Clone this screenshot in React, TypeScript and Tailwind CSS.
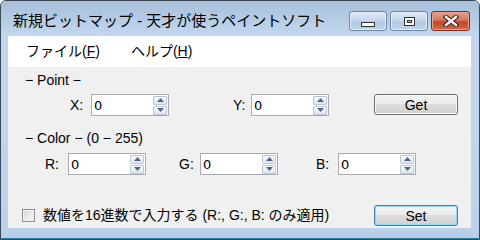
import React from 'react';

const font = "font-['Liberation_Sans','Noto_Sans_CJK_JP',sans-serif]";

function SpinArrow({ up }: { up?: boolean }) {
  return (
    <div className="w-[14px] h-[9px] border border-[#bfc7d2] rounded-[1px] bg-gradient-to-b from-[#f9fafc] to-[#dfe5ee] flex items-center justify-center">
      <svg width="7" height="4" viewBox="0 0 7 4">
        {up ? <path d="M0 4 L3.5 0 L7 4 Z" fill="#4f6399" /> : <path d="M0 0 L3.5 4 L7 0 Z" fill="#4f6399" />}
      </svg>
    </div>
  );
}

function SpinBox() {
  return (
    <div className="w-[78px] h-[22px] border border-[#a8abb2] bg-white flex items-center justify-between pl-[2px] pr-[1px]">
      <span className="text-[13px] leading-none text-black font-['DejaVu_Sans',sans-serif]">0</span>
      <div className="flex flex-col gap-[1px]">
        <SpinArrow up />
        <SpinArrow />
      </div>
    </div>
  );
}

function PushButton({ label, focused }: { label: string; focused?: boolean }) {
  return (
    <button
      className={
        focused
          ? 'w-[84px] h-[21px] rounded-[3px] border border-[#3c7fb1] shadow-[inset_0_0_0_1px_#8fdcf7] bg-[linear-gradient(to_bottom,#f4f4f4_0%,#ececec_50%,#dedede_50%,#d0d0d0_100%)] text-[14px] leading-none text-black'
          : 'w-[84px] h-[21px] rounded-[3px] border border-[#707070] shadow-[inset_0_0_0_1px_#fbfbfb] bg-[linear-gradient(to_bottom,#f2f2f2_0%,#ebebeb_50%,#dddddd_50%,#cfcfcf_100%)] text-[14px] leading-none text-black'
      }
    >
      {label}
    </button>
  );
}

function CaptionButtons() {
  const glass =
    'w-[38px] h-[20px] rounded-[3px] border border-[#6f86a5] shadow-[inset_0_0_0_1px_#e6eef8] bg-[linear-gradient(to_bottom,#dde8f5_0%,#c8d8ed_45%,#b3c9e5_55%,#bfd3ec_100%)] flex items-center justify-center';
  return (
    <div className="flex gap-[3px] mt-[10px]">
      <div className={glass}>
        <div className="mt-[7px] w-[14px] h-[5px] border border-[#333] bg-white" />
      </div>
      <div className={glass}>
        <div className="w-[11px] h-[9px] border border-[#333] bg-white flex items-center justify-center">
          <div className="w-[5px] h-[3px] border border-[#333] bg-[#9fb8d8]" />
        </div>
      </div>
      <div className="w-[39px] h-[20px] rounded-[3px] border border-[#7a2b1c] shadow-[inset_0_0_0_1px_#eaa493] bg-[linear-gradient(to_bottom,#e8a18c_0%,#d8775e_45%,#c2452a_55%,#d16a4c_100%)] flex items-center justify-center">
        <svg width="16" height="12" viewBox="0 0 16 12">
          <path d="M3 2 L13 10 M13 2 L3 10" stroke="#3b1a12" strokeWidth="4.4" strokeLinecap="square" />
          <path d="M3 2 L13 10 M13 2 L3 10" stroke="#ffffff" strokeWidth="2.4" strokeLinecap="square" />
        </svg>
      </div>
    </div>
  );
}

export default function App() {
  return (
    <div className={`w-[480px] h-[240px] border border-[#3c4654] rounded-t-[6px] overflow-hidden flex flex-col bg-[#c0d4ed] text-black ${font}`}>
      {/* title bar */}
      <div className="h-[35px] shrink-0 flex justify-between bg-gradient-to-b from-[#a8bfda] to-[#c3d7ef] pl-[12px] pr-[9px]">
        <div className="mt-[10px] text-[15px] leading-[20px] text-black">新規ビットマップ - 天才が使うペイントソフト</div>
        <CaptionButtons />
      </div>

      <div className="h-[192px] shrink-0 flex">
        <div className="w-[7px] shrink-0 bg-gradient-to-b from-[#c3d7ef] to-[#bcd2ec]" />
        {/* client */}
        <div className="w-[463px] shrink-0 flex flex-col">
          <div className="h-[31px] shrink-0 bg-white flex items-center text-[14px]">
            <span className="ml-[18px]">ファイル(<span className="underline">F</span>)</span>
            <span className="ml-[31px]">ヘルプ(<span className="underline">H</span>)</span>
          </div>
          <div className="flex-1 bg-[#f0f0f0] pt-[5px] text-[14px]">
            <div className="ml-[17px] leading-[16px]">− Point −</div>
            <div className="mt-[6px] flex items-center">
              <span className="ml-[62px] w-[21px]">X:</span>
              <SpinBox />
              <span className="ml-[64px] w-[18px]">Y:</span>
              <SpinBox />
              <div className="ml-[45px]">
                <PushButton label="Get" />
              </div>
            </div>
            <div className="mt-[14px] ml-[17px] leading-[16px]">− Color − (0 − 255)</div>
            <div className="mt-[7px] flex items-center">
              <span className="ml-[37px] w-[23px]">R:</span>
              <SpinBox />
              <span className="ml-[33px] w-[21px]">G:</span>
              <SpinBox />
              <span className="ml-[38px] w-[22px]">B:</span>
              <SpinBox />
            </div>
            <div className="mt-[30px] flex items-center">
              <div className="ml-[14px] w-[13px] h-[13px] shrink-0 border border-[#8f8f8f] bg-[linear-gradient(135deg,#d6d6d6,#fafafa)] shadow-[inset_0_0_0_1px_#f4f4f4]" />
              <span className="ml-[8px] w-[331px] shrink-0">数値を16進数で入力する (R:, G:, B: のみ適用)</span>
              <PushButton label="Set" focused />
            </div>
          </div>
        </div>
        <div className="w-[8px] shrink-0 bg-gradient-to-b from-[#c3d7ef] to-[#bcd2ec]" />
      </div>

      <div className="flex-1 bg-gradient-to-b from-[#bcd2ec] to-[#b4cce9] border-b border-[#2e7f9c]" />
    </div>
  );
}
